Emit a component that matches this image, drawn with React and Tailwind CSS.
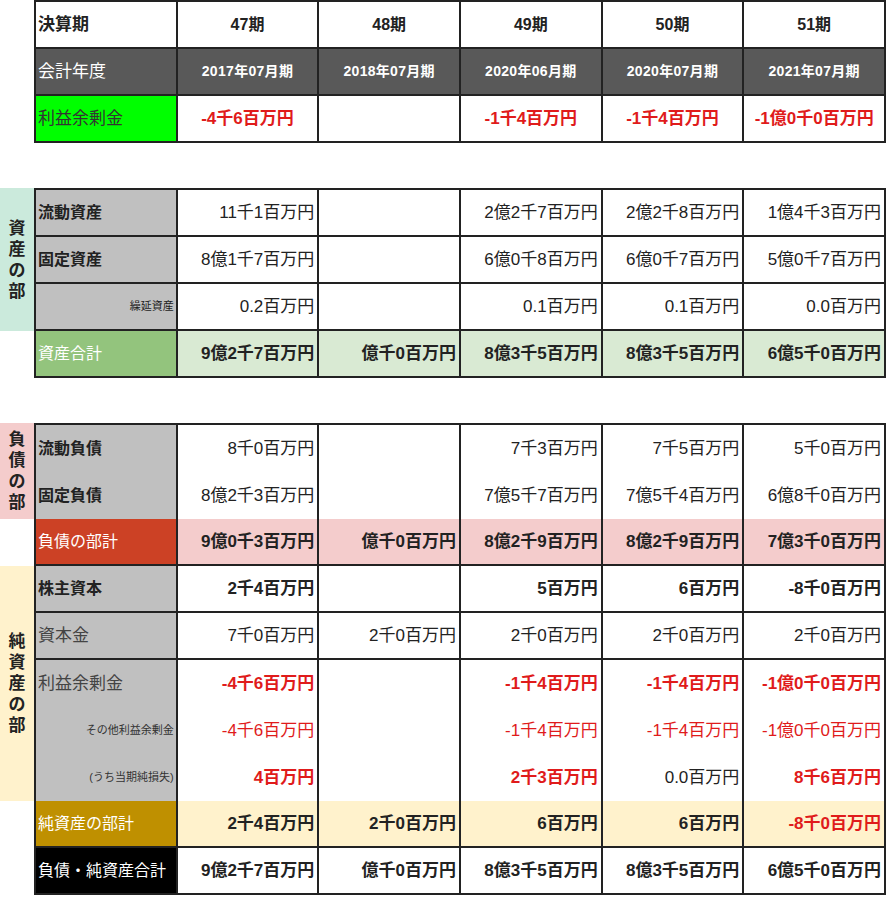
import React from "react";

const RED = "text-[#e01b1b]";

// one spreadsheet row: label cell + 5 period cells
function Row({ label, labelCls = "", cells, cellCls = "", bg = "", border = true, align = "text-right" }) {
  return (
    <div
      className={
        "grid grid-cols-6 h-[47px] " + (border ? "border-b-2 border-[#222] " : "") + bg
      }
    >
      <div className={"flex items-center px-[2px] border-r-2 border-[#222] " + labelCls}>{label}</div>
      {cells.map((c, i) => {
        const v = typeof c === "string" ? { t: c } : c;
        return (
          <div
            key={i}
            className={
              "flex items-center border-r-2 border-[#222] whitespace-nowrap " +
              (align === "text-center" ? "justify-center " : "justify-end pr-[3px] ") +
              cellCls +
              " " +
              (v.cls || "")
            }
          >
            {v.t}
          </div>
        );
      })}
    </div>
  );
}

function Band({ h, bg, text }) {
  return (
    <div className={"flex items-center justify-center " + h + " " + bg}>
      {text && (
        <div className="flex flex-col items-center text-[17px] font-bold leading-[21px] text-[#222]">
          {text.split("").map((ch, i) => (
            <span key={i}>{ch}</span>
          ))}
        </div>
      )}
    </div>
  );
}

export default function App() {
  const r = (t) => ({ t, cls: RED + " font-bold" });
  const rn = (t) => ({ t, cls: RED });

  return (
    <div className="w-[886px] bg-white text-[#222] font-['Liberation_Sans','Noto_Sans_CJK_JP',sans-serif]">
      {/* 期・会計年度 */}
      <div className="flex">
        <div className="w-[34px]" />
        <div className="w-[852px] border-l-2 border-t-2 border-[#222]">
          <Row
            label="決算期"
            labelCls="text-[17px] font-bold"
            cells={["47期", "48期", "49期", "50期", "51期"]}
            cellCls="text-[16px] font-bold"
            align="text-center"
          />
          <Row
            label="会計年度"
            labelCls="text-[17px] text-white"
            bg="bg-[#595959]"
            cells={["2017年07月期", "2018年07月期", "2020年06月期", "2020年07月期", "2021年07月期"]}
            cellCls="text-[14px] font-bold text-white tracking-[0.3px]"
            align="text-center"
          />
          <Row
            label="利益余剰金"
            labelCls="text-[17px] bg-[#00ff00] text-[#333]"
            cells={["-4千6百万円", "", "-1千4百万円", "-1千4百万円", "-1億0千0百万円"]}
            cellCls={"text-[17px] font-bold " + RED}
            align="text-center"
          />
        </div>
      </div>

      <div className="h-[45px]" />

      {/* 資産の部 */}
      <div className="flex">
        <div className="w-[34px] flex flex-col">
          <Band h="h-[143px]" bg="bg-[#cbeadc]" text="資産の部" />
        </div>
        <div className="w-[852px] border-l-2 border-t-2 border-[#222]">
          <Row
            label="流動資産"
            labelCls="bg-[#c0c0c0] text-[16px] font-bold"
            cells={["11千1百万円", "", "2億2千7百万円", "2億2千8百万円", "1億4千3百万円"]}
            cellCls="text-[17px]"
          />
          <Row
            label="固定資産"
            labelCls="bg-[#c0c0c0] text-[16px] font-bold"
            cells={["8億1千7百万円", "", "6億0千8百万円", "6億0千7百万円", "5億0千7百万円"]}
            cellCls="text-[17px]"
          />
          <Row
            label={<span className="ml-auto text-[11px]">繰延資産</span>}
            labelCls="bg-[#c0c0c0]"
            cells={["0.2百万円", "", "0.1百万円", "0.1百万円", "0.0百万円"]}
            cellCls="text-[17px]"
          />
          <Row
            label="資産合計"
            labelCls="bg-[#93c47d] text-white text-[16px]"
            bg="bg-[#d9ead3]"
            cells={["9億2千7百万円", "億千0百万円", "8億3千5百万円", "8億3千5百万円", "6億5千0百万円"]}
            cellCls="text-[17px] font-bold"
          />
        </div>
      </div>

      <div className="h-[45px]" />

      {/* 負債の部・純資産の部 */}
      <div className="flex">
        <div className="w-[34px] flex flex-col">
          <Band h="h-[96px]" bg="bg-[#f4cccc]" text="負債の部" />
          <div className="h-[47px]" />
          <Band h="h-[235px]" bg="bg-[#fff2cc]" text="純資産の部" />
        </div>
        <div className="w-[852px] border-l-2 border-t-2 border-[#222]">
          <Row
            label="流動負債"
            labelCls="bg-[#c0c0c0] text-[16px] font-bold"
            cells={["8千0百万円", "", "7千3百万円", "7千5百万円", "5千0百万円"]}
            cellCls="text-[17px]"
            border={false}
          />
          <Row
            label="固定負債"
            labelCls="bg-[#c0c0c0] text-[16px] font-bold"
            cells={["8億2千3百万円", "", "7億5千7百万円", "7億5千4百万円", "6億8千0百万円"]}
            cellCls="text-[17px]"
            border={false}
          />
          <Row
            label="負債の部計"
            labelCls="bg-[#cc4125] text-white text-[16px]"
            bg="bg-[#f4cccc]"
            cells={["9億0千3百万円", "億千0百万円", "8億2千9百万円", "8億2千9百万円", "7億3千0百万円"]}
            cellCls="text-[17px] font-bold"
          />
          <Row
            label="株主資本"
            labelCls="bg-[#c0c0c0] text-[16px] font-bold"
            cells={["2千4百万円", "", "5百万円", "6百万円", "-8千0百万円"]}
            cellCls="text-[17px] font-bold"
          />
          <Row
            label="資本金"
            labelCls="bg-[#c0c0c0] text-[17px] text-[#444]"
            cells={["7千0百万円", "2千0百万円", "2千0百万円", "2千0百万円", "2千0百万円"]}
            cellCls="text-[17px]"
          />
          <Row
            label="利益余剰金"
            labelCls="bg-[#c0c0c0] text-[17px] text-[#444]"
            cells={[r("-4千6百万円"), "", r("-1千4百万円"), r("-1千4百万円"), r("-1億0千0百万円")]}
            cellCls="text-[17px]"
            border={false}
          />
          <Row
            label={<span className="ml-auto text-[11px] text-[#333]">その他利益余剰金</span>}
            labelCls="bg-[#c0c0c0]"
            cells={[rn("-4千6百万円"), "", rn("-1千4百万円"), rn("-1千4百万円"), rn("-1億0千0百万円")]}
            cellCls="text-[17px]"
            border={false}
          />
          <Row
            label={<span className="ml-auto text-[11px] text-[#333]">(うち当期純損失)</span>}
            labelCls="bg-[#c0c0c0]"
            cells={[r("4百万円"), "", r("2千3百万円"), "0.0百万円", r("8千6百万円")]}
            cellCls="text-[17px]"
            border={false}
          />
          <Row
            label="純資産の部計"
            labelCls="bg-[#bf9000] text-white text-[16px]"
            bg="bg-[#fff2cc]"
            cells={["2千4百万円", "2千0百万円", "6百万円", "6百万円", r("-8千0百万円")]}
            cellCls="text-[17px] font-bold"
          />
          <Row
            label={<span className="font-normal">負債・純資産合計</span>}
            labelCls="bg-black text-white text-[16px]"
            cells={["9億2千7百万円", "億千0百万円", "8億3千5百万円", "8億3千5百万円", "6億5千0百万円"]}
            cellCls="text-[17px] font-bold"
          />
        </div>
      </div>
    </div>
  );
}
